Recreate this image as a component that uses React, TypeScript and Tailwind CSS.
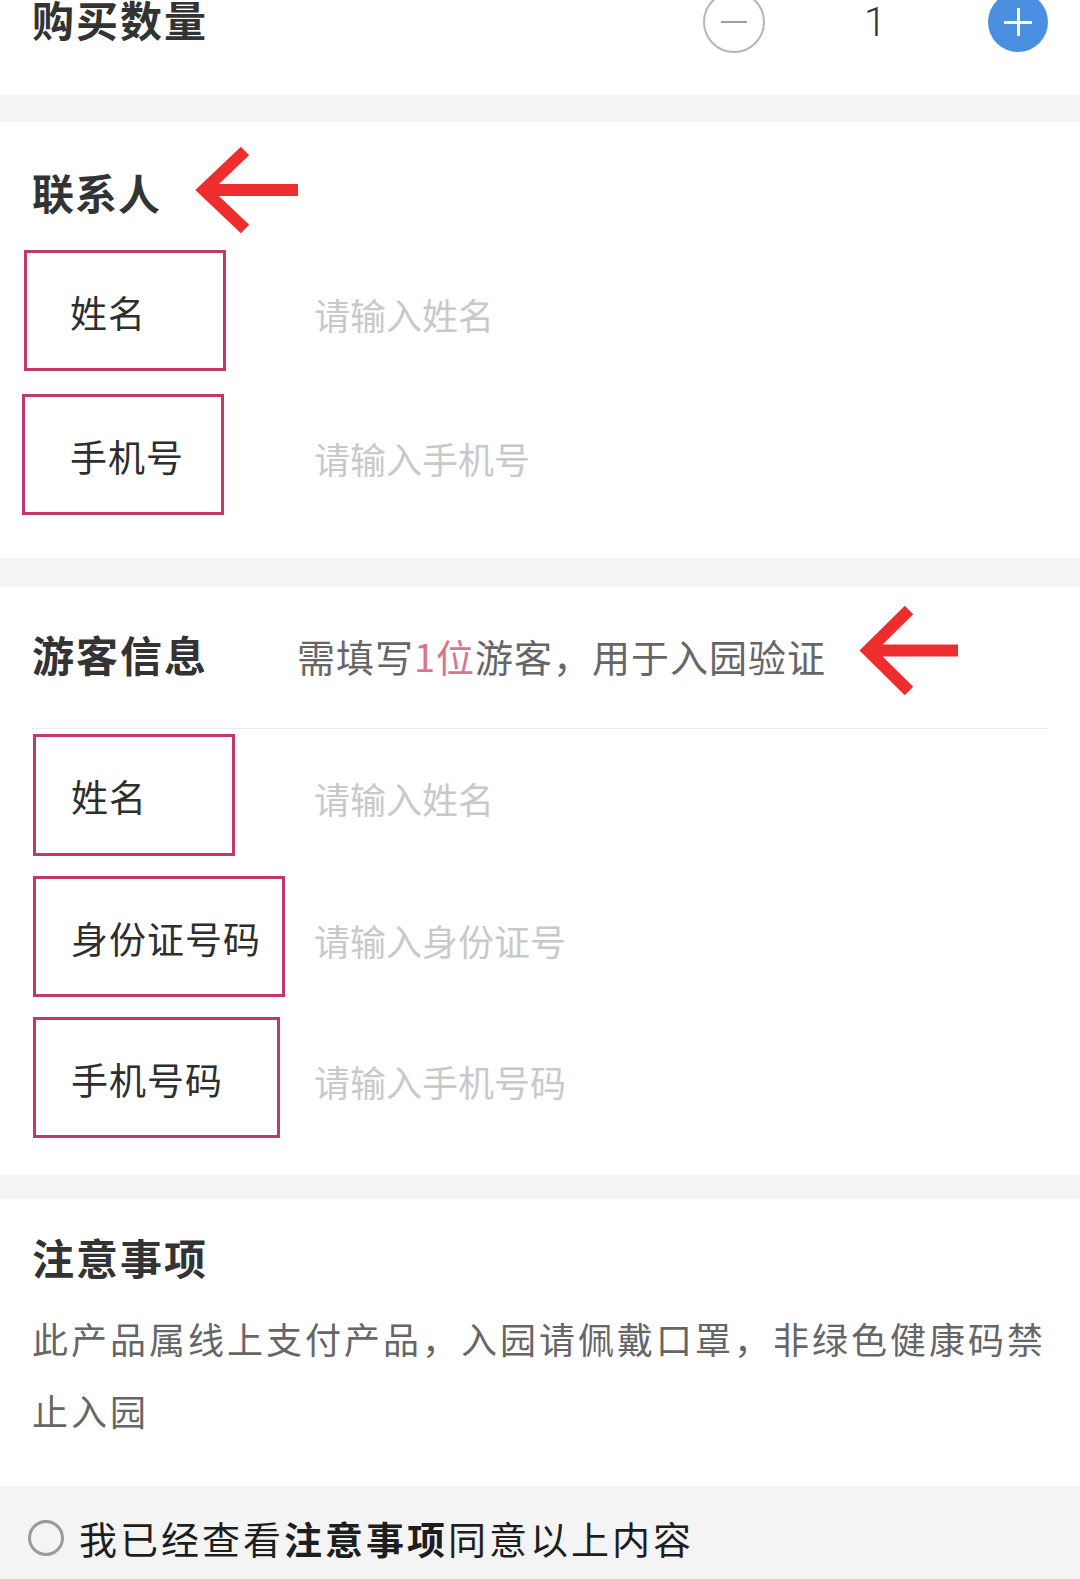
import React from "react";

const F = "font-['Noto_Sans_CJK_SC','Noto_Sans',sans-serif]";

function Arrow({ w, h }: { w: number; h: number }) {
  return (
    <svg width={w} height={h} viewBox={`0 0 ${w} ${h}`} className="shrink-0">
      <path
        d={`M ${w - 2} ${h / 2} L 10 ${h / 2} M 50 6 L 9 ${h / 2} L 50 ${h - 6}`}
        fill="none"
        stroke="#ee2e2e"
        strokeWidth={12}
        strokeLinejoin="miter"
      />
    </svg>
  );
}

function Row({
  label,
  placeholder,
  boxLeft,
  boxW,
  boxH,
  pad,
}: {
  label: string;
  placeholder: string;
  boxLeft: string;
  boxW: string;
  boxH: string;
  pad: string;
}) {
  return (
    <div className="flex items-center">
      <div className="w-[314px] shrink-0">
        <div
          className={`${boxLeft} ${boxW} ${boxH} ${pad} border-[3px] border-[#c2386b] flex items-center pt-[3px]`}
        >
          <span className="text-[37px] leading-none tracking-[1px] text-[#2e2e2e] whitespace-nowrap">
            {label}
          </span>
        </div>
      </div>
      <span className="text-[36px] leading-none text-[#c9c9c9] pt-[6px] whitespace-nowrap">
        {placeholder}
      </span>
    </div>
  );
}

export default function App() {
  return (
    <div className={`${F} w-[1080px] h-[1579px] bg-white overflow-hidden`}>
      {/* purchase quantity */}
      <div className="h-[95px] overflow-hidden bg-white">
        <div className="-mt-[10px] h-[64px] flex items-center pl-[32px] pr-[32px]">
          <span className="text-[42px] font-bold tracking-[2px] leading-none text-[#333] -mt-[6px]">
            购买数量
          </span>
          <div className="ml-auto flex items-center">
            <div className="w-[62px] h-[62px] rounded-full border-2 border-[#b5b5b5] flex items-center justify-center">
              <div className="w-[26px] h-[2px] bg-[#a0a0a0]" />
            </div>
            <span className="w-[60px] ml-[80px] mr-[83px] pt-[2px] text-center text-[40px] font-light leading-none text-[#333] font-['Roboto',sans-serif]">
              1
            </span>
            <div className="w-[60px] h-[60px] rounded-full bg-[#4a8fe0] flex items-center justify-center relative">
              <div className="w-[28px] h-[3px] bg-white" />
              <div className="absolute w-[3px] h-[28px] bg-white" />
            </div>
          </div>
        </div>
      </div>
      <div className="h-[27px] bg-[#f4f4f4]" />

      {/* contact */}
      <div className="h-[436px] pt-[23px]">
        <div className="flex items-center pl-[32px] h-[90px]">
          <span className="w-[163px] text-[42px] font-bold tracking-[1px] leading-none text-[#333] pt-[4px]">
            联系人
          </span>
          <Arrow w={105} h={90} />
        </div>
        <div className="mt-[15px] flex flex-col gap-[23px]">
          <Row label="姓名" placeholder="请输入姓名" boxLeft="ml-[24px]" boxW="w-[202px]" boxH="h-[121px]" pad="pl-[43px]" />
          <Row label="手机号" placeholder="请输入手机号" boxLeft="ml-[22px]" boxW="w-[202px]" boxH="h-[121px]" pad="pl-[45px]" />
        </div>
      </div>
      <div className="h-[29px] bg-[#f4f4f4]" />

      {/* visitor info */}
      <div className="h-[588px] pt-[17px]">
        <div className="flex items-center pl-[32px] h-[93px]">
          <span className="w-[265px] shrink-0 text-[42px] font-bold tracking-[2px] leading-none text-[#333] pt-[6px]">
            游客信息
          </span>
          <span className="w-[562px] shrink-0 text-[38px] tracking-[1px] leading-none text-[#666] pt-[10px] whitespace-nowrap">
            需填写<span className="text-[#d9758c]">1位</span>游客，用于入园验证
          </span>
          <Arrow w={101} h={93} />
        </div>
        <div className="mt-[31px] ml-[32px] mr-[32px] h-[1px] bg-[#ececec]" />
        <div className="mt-[5px] flex flex-col gap-[20px]">
          <Row label="姓名" placeholder="请输入姓名" boxLeft="ml-[33px]" boxW="w-[202px]" boxH="h-[122px]" pad="pl-[35px]" />
          <Row label="身份证号码" placeholder="请输入身份证号" boxLeft="ml-[33px]" boxW="w-[252px]" boxH="h-[121px]" pad="pl-[35px]" />
          <Row label="手机号码" placeholder="请输入手机号码" boxLeft="ml-[33px]" boxW="w-[247px]" boxH="h-[121px]" pad="pl-[35px]" />
        </div>
      </div>
      <div className="h-[24px] bg-[#f4f4f4]" />

      {/* notes */}
      <div className="h-[287px] pt-[28px] px-[32px]">
        <div className="h-[60px] flex items-center text-[42px] font-bold tracking-[2px] leading-none text-[#333]">
          注意事项
        </div>
        <p className="mt-[15px] text-[36px] tracking-[3px] leading-[72px] text-[#666]">
          此产品属线上支付产品，入园请佩戴口罩，非绿色健康码禁止入园
        </p>
      </div>

      {/* agreement */}
      <div className="h-[93px] bg-[#f4f4f4] flex items-center pl-[28px] pt-[10px]">
        <div className="w-[36px] h-[36px] rounded-full border-[3px] border-[#9a9a9a] shrink-0" />
        <span className="ml-[15px] text-[38px] tracking-[3px] leading-none text-[#1e1e1e] whitespace-nowrap">
          我已经查看<span className="font-bold">注意事项</span>同意以上内容
        </span>
      </div>
    </div>
  );
}
